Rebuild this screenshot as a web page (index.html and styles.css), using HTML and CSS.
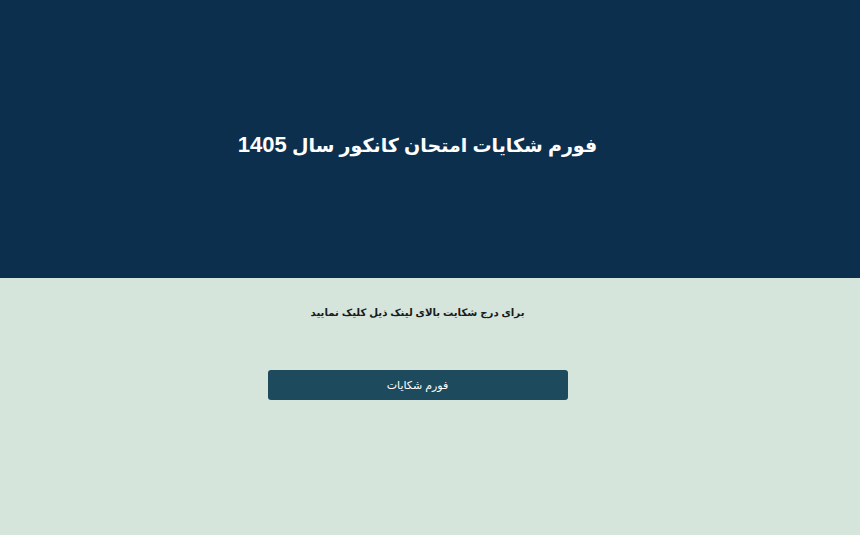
FILE: index.html
```html
<!DOCTYPE html>
<html lang="fa" dir="rtl">
<head>
    <meta charset="UTF-8">
    <meta name="viewport" content="width=device-width, initial-scale=1.0">
    <title>فورم شکایات امتحان کانکور سال 1405</title>
    <link rel="stylesheet" href="styles.css">
</head>
<body>
    <header class="hero">
        <h1>فورم شکایات امتحان کانکور سال <span class="year">1405</span></h1>
    </header>

    <main class="content">
        <p class="note">برای درج شکایت بالای لینک ذیل کلیک نمایید</p>
        <a class="form-link" href="#">فورم شکایات</a>
    </main>
</body>
</html>
```

FILE: styles.css
```css
html, body {
    height: 100%;
}
body {
    margin: 0;
    font-family: "Liberation Sans", "DejaVu Sans", sans-serif;
    background-color: #d5e5dc;
    display: flex;
    flex-direction: column;
}
.hero {
    height: 278px;
    padding-right: 25px;
    background-color: #0c2f4e;
    display: flex;
    align-items: center;
    justify-content: center;
    flex-shrink: 0;
}
.hero h1 {
    margin: 12px 0 0;
    color: #fff;
    font-size: 19px;
    font-weight: bold;
}
.hero .year {
    font-size: 22px;
}
.content {
    display: flex;
    flex-direction: column;
    align-items: center;
    padding-top: 29px;
    padding-right: 25px;
}
.note {
    margin: 0;
    font-size: 10.2px;
    font-weight: bold;
    color: #1a1a1a;
}
.form-link {
    display: flex;
    align-items: center;
    justify-content: center;
    width: 300px;
    height: 30px;
    margin-top: 52px;
    background-color: #1e4a5e;
    color: #fff;
    font-size: 11px;
    text-decoration: none;
    border-radius: 3px;
}
```
